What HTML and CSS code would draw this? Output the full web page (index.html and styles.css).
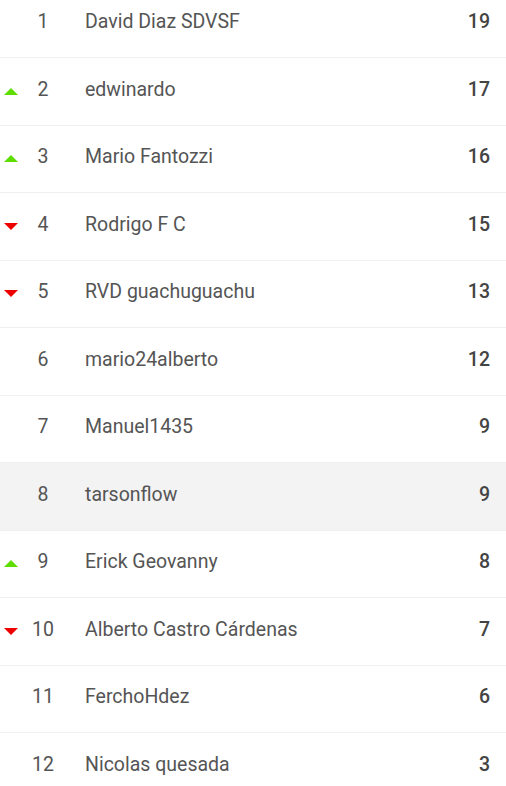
FILE: index.html
```html
<!DOCTYPE html>
<html lang="es">
<head>
<meta charset="utf-8">
<title>Clasificación</title>
<link rel="stylesheet" href="styles.css">
</head>
<body>
<ul class="ranking">
  <li class="row"><span class="trend"></span><span class="rank">1</span><span class="name">David Diaz SDVSF</span><span class="score">19</span></li>
  <li class="row"><span class="trend"><i class="up"></i></span><span class="rank">2</span><span class="name">edwinardo</span><span class="score">17</span></li>
  <li class="row"><span class="trend"><i class="up"></i></span><span class="rank">3</span><span class="name">Mario Fantozzi</span><span class="score">16</span></li>
  <li class="row"><span class="trend"><i class="down"></i></span><span class="rank">4</span><span class="name">Rodrigo F C</span><span class="score">15</span></li>
  <li class="row"><span class="trend"><i class="down"></i></span><span class="rank">5</span><span class="name">RVD guachuguachu</span><span class="score">13</span></li>
  <li class="row"><span class="trend"></span><span class="rank">6</span><span class="name">mario24alberto</span><span class="score">12</span></li>
  <li class="row"><span class="trend"></span><span class="rank">7</span><span class="name">Manuel1435</span><span class="score">9</span></li>
  <li class="row current"><span class="trend"></span><span class="rank">8</span><span class="name">tarsonflow</span><span class="score">9</span></li>
  <li class="row"><span class="trend"><i class="up"></i></span><span class="rank">9</span><span class="name">Erick Geovanny</span><span class="score">8</span></li>
  <li class="row"><span class="trend"><i class="down"></i></span><span class="rank">10</span><span class="name">Alberto Castro Cárdenas</span><span class="score">7</span></li>
  <li class="row"><span class="trend"></span><span class="rank">11</span><span class="name">FerchoHdez</span><span class="score">6</span></li>
  <li class="row"><span class="trend"></span><span class="rank">12</span><span class="name">Nicolas quesada</span><span class="score">3</span></li>
</ul>
</body>
</html>
```
FILE: styles.css
```css
html, body {
  margin: 0;
  padding: 0;
  background: #ffffff;
}
body {
  font-family: Roboto, "Liberation Sans", Arial, sans-serif;
  color: #555555;
  overflow: hidden;
}
.ranking {
  list-style: none;
  margin: -9.5px 0 0 0;
  padding: 0;
}
.row {
  box-sizing: border-box;
  height: 67.5px;
  display: grid;
  grid-template-columns: 28px 30px 1fr auto;
  align-items: center;
  padding: 0 16px 4px 0;
  border-bottom: 1px solid #f0f0f0;
  font-size: 19.5px;
}
.row.current {
  background: #f3f3f3;
}
.trend {
  display: flex;
  align-items: center;
  padding-left: 4px;
  padding-top: 4px;
}
.up, .down {
  display: block;
  width: 0;
  height: 0;
  border-left: 7px solid transparent;
  border-right: 7px solid transparent;
}
.up {
  border-bottom: 7px solid #5fdc00;
}
.down {
  border-top: 7px solid #ee0000;
}
.rank {
  text-align: center;
  color: #555555;
}
.name {
  padding-left: 27px;
  color: #555555;
  white-space: nowrap;
}
.score {
  text-align: right;
  font-weight: 500;
  color: #444444;
}
```
